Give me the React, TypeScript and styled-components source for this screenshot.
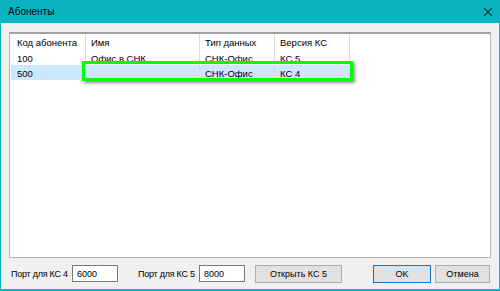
import React from "react";
import styled, { createGlobalStyle } from "styled-components";

const Global = createGlobalStyle`
  html, body { margin: 0; padding: 0; background: #f0f0f0; }
  * { box-sizing: border-box; }
  body { font-family: "Liberation Sans", Arial, sans-serif; font-size: 9.5px; color: #000; }
`;

const Window = styled.div`
  width: 500px;
  height: 291px;
  display: flex;
  flex-direction: column;
  background: #f0f0f0;
  border: 1px solid #0ab4c2;
  border-top: none;
  border-bottom-width: 2px;
`;

const TitleBar = styled.div`
  height: 23px;
  margin: 0 -1px;
  background: #0ab4c2;
  display: flex;
  align-items: center;
  justify-content: space-between;
  padding: 0 8px 0 8px;
  font-size: 10px;
  color: #000;
`;

const CloseIcon = styled.svg`
  width: 10px;
  height: 10px;
  margin-right: -1px;
`;

const Body = styled.div`
  flex: 1;
  display: flex;
  flex-direction: column;
  padding: 9px 8px 0 8px;
`;

const ListBox = styled.div`
  position: relative;
  height: 226px;
  background: #fff;
  border: 1px solid #b4b4b4;
  border-top: 2px solid #a0a0a0;
  padding-left: 1px;
`;

const Row = styled.div<{ $head?: boolean; $selected?: boolean }>`
  display: flex;
  height: ${(p) => (p.$head ? 16 : 15)}px;
  align-items: stretch;
  width: 339px;
  background: ${(p) => (p.$selected ? "#cce8ff" : "transparent")};
`;

const Cell = styled.div<{ $w: number; $pad: number }>`
  width: ${(p) => p.$w}px;
  padding-left: ${(p) => p.$pad}px;
  padding-top: 1px;
  display: flex;
  align-items: center;
  border-right: 1px solid #dcdcdc;
  white-space: nowrap;
  overflow: hidden;
`;

const Highlight = styled.div`
  position: absolute;
  left: 72px;
  top: 27px;
  width: 271px;
  height: 20px;
  border: 3px solid #00ff00;
  box-shadow: 2px 2px 3px rgba(0, 0, 0, 0.45);
  pointer-events: none;
`;

const Footer = styled.div`
  height: 31px;
  display: flex;
  align-items: center;
  padding-left: 2px;
`;

const Label = styled.span<{ $ml?: number }>`
  width: 61px;
  margin-left: ${(p) => p.$ml ?? 0}px;
  white-space: nowrap;
  font-size: 9px;
  letter-spacing: -0.25px;
`;

const Input = styled.div`
  width: 46px;
  height: 17px;
  background: #fff;
  border: 1px solid #7a7a7a;
  padding-left: 4px;
  display: flex;
  align-items: center;
  font-size: 9px;
`;

const Button = styled.div<{ $w: number; $ml: number; $primary?: boolean }>`
  width: ${(p) => p.$w}px;
  margin-left: ${(p) => p.$ml}px;
  height: 18px;
  background: #e1e1e1;
  border: 1px solid ${(p) => (p.$primary ? "#0078d7" : "#adadad")};
  display: flex;
  align-items: center;
  justify-content: center;
  font-size: 9px;
`;

const cols = [
  { w: 75, pad: 6 },
  { w: 114, pad: 5 },
  { w: 75, pad: 5 },
  { w: 75, pad: 5 },
];

const rows = [
  ["Код абонента", "Имя", "Тип данных", "Версия КС"],
  ["100", "Офис в СНК", "СНК-Офис", "КС 5"],
  ["500", "", "СНК-Офис", "КС 4"],
];

export default function App() {
  return (
    <>
      <Global />
      <Window>
        <TitleBar>
          <span>Абоненты</span>
          <CloseIcon viewBox="0 0 10 10">
            <path d="M1 1 L9 9 M9 1 L1 9" stroke="#1b3b40" strokeWidth="1.1" fill="none" />
          </CloseIcon>
        </TitleBar>
        <Body>
          <ListBox>
            {rows.map((r, i) => (
              <Row key={i} $head={i === 0} $selected={i === 2}>
                {r.map((t, j) => (
                  <Cell key={j} $w={cols[j].w} $pad={cols[j].pad}>
                    {t}
                  </Cell>
                ))}
              </Row>
            ))}
            <Highlight />
          </ListBox>
          <Footer>
            <Label>Порт для КС 4</Label>
            <Input>6000</Input>
            <Label $ml={20}>Порт для КС 5</Label>
            <Input>8000</Input>
            <Button $w={87} $ml={10}>Открыть КС 5</Button>
            <Button $w={58} $ml={31} $primary>OK</Button>
            <Button $w={55} $ml={4}>Отмена</Button>
          </Footer>
        </Body>
      </Window>
    </>
  );
}
